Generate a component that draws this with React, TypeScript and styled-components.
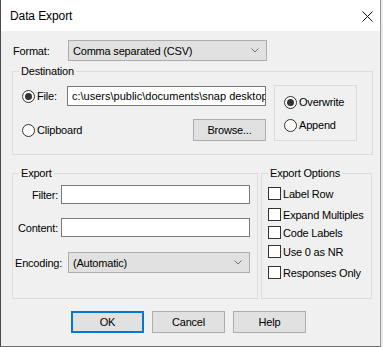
import React from 'react';
import styled, { createGlobalStyle } from 'styled-components';

const GlobalStyle = createGlobalStyle`
  html, body {
    margin: 0;
    padding: 0;
    background: #e9e9e9;
  }
  body {
    font-family: "Liberation Sans", Arial, sans-serif;
    font-size: 11px;
    letter-spacing: -0.2px;
    color: #000;
  }
`;

const Chevron = () => (
  <svg width="8" height="5" viewBox="0 0 8 5">
    <path d="M0.5 0.5 L4 4 L7.5 0.5" fill="none" stroke="#707070" strokeWidth="1" />
  </svg>
);

const CloseIcon = () => (
  <svg width="11" height="11" viewBox="0 0 11 11">
    <path d="M0.5 0.5 L10.5 10.5 M10.5 0.5 L0.5 10.5" stroke="#111" strokeWidth="1" />
  </svg>
);

const Radio = ({ checked, label }: { checked?: boolean; label: string }) => (
  <RadioRow>
    <RadioDot $checked={checked} />
    <span>{label}</span>
  </RadioRow>
);

const Check = ({ label, $space }: { label: string; $space: number }) => (
  <CheckRow $space={$space}>
    <CheckBox />
    <span>{label}</span>
  </CheckRow>
);

const App = () => {
  return (
    <>
      <GlobalStyle />
      <Window>
        <TitleBar>
          <Title>Data Export</Title>
          <CloseButton>
            <CloseIcon />
          </CloseButton>
        </TitleBar>
        <Body>
          <FormatRow>
            <FieldLabel $width={55}>Format:</FieldLabel>
            <Select $width={199}>
              <span>Comma separated (CSV)</span>
              <Chevron />
            </Select>
          </FormatRow>

          <Group>
            <Legend>Destination</Legend>
            <DestinationBody>
              <DestColumn>
                <DestRow>
                  <RadioSlot>
                    <Radio checked label="File:" />
                  </RadioSlot>
                  <TextBox $width={199}>
                    <Clip>c:\users\public\documents\snap desktop\export.csv</Clip>
                  </TextBox>
                </DestRow>
                <DestRow $between>
                  <Radio label="Clipboard" />
                  <Button>Browse...</Button>
                </DestRow>
              </DestColumn>
              <ModeBox>
                <Radio checked label="Overwrite" />
                <Radio label="Append" />
              </ModeBox>
            </DestinationBody>
          </Group>

          <LowerRow>
            <Group $width={246} $pad="0 7px 0 0">
              <Legend $offset={8}>Export</Legend>
              <ExportRows>
                <InputRow>
                  <RowLabel>Filter:</RowLabel>
                  <TextBox $width={189} $height={19} />
                </InputRow>
                <InputRow $top={14}>
                  <RowLabel>Content:</RowLabel>
                  <TextBox $width={189} $height={19} />
                </InputRow>
                <InputRow $top={15}>
                  <RowLabel $left>Encoding:</RowLabel>
                  <Select $width={182}>
                    <span>(Automatic)</span>
                    <Chevron />
                  </Select>
                </InputRow>
              </ExportRows>
            </Group>
            <Group $width={111} $pad="0 0 0 6px">
              <Legend $offset={2}>Export Options</Legend>
              <Check label="Label Row" $space={7} />
              <Check label="Expand Multiples" $space={8} />
              <Check label="Code Labels" $space={5} />
              <Check label="Use 0 as NR" $space={6} />
              <Check label="Responses Only" $space={8} />
            </Group>
          </LowerRow>

          <ButtonRow>
            <Button $primary>OK</Button>
            <Button>Cancel</Button>
            <Button>Help</Button>
          </ButtonRow>
        </Body>
      </Window>
    </>
  );
};

export default App;

const Window = styled.div`
  width: 381px;
  height: 347px;
  box-sizing: border-box;
  display: flex;
  flex-direction: column;
  background: #f0f0f0;
  border-left: 1px solid #4b4b4b;
  border-right: 1px solid #9a9a9a;
  border-bottom: 1px solid #6e6e6e;
`;

const TitleBar = styled.div`
  height: 31px;
  flex-shrink: 0;
  display: flex;
  align-items: center;
  justify-content: space-between;
  background: #fff;
  padding-left: 9px;
  padding-right: 7px;
`;

const Title = styled.div`
  font-size: 12px;
  letter-spacing: -0.1px;
`;

const CloseButton = styled.div`
  display: flex;
  align-items: center;
  padding-top: 1px;
`;

const Body = styled.div`
  display: flex;
  flex-direction: column;
  padding: 9px 7px 0 11px;
`;

const FormatRow = styled.div`
  display: flex;
  align-items: center;
  height: 21px;
`;

const FieldLabel = styled.div<{ $width: number }>`
  width: ${p => p.$width}px;
  padding-left: 1px;
`;

const Select = styled.div<{ $width: number }>`
  width: ${p => p.$width}px;
  height: 21px;
  box-sizing: border-box;
  display: flex;
  align-items: center;
  justify-content: space-between;
  padding: 0 7px 0 4px;
  background: #e1e1e1;
  border: 1px solid #adadad;
  white-space: nowrap;
`;

const Group = styled.fieldset<{ $width?: number; $pad?: string }>`
  margin: 4px 0 0;
  padding: ${p => p.$pad ?? '0 0 13px 9px'};
  border: 1px solid #dcdcdc;
  min-width: 0;
  box-sizing: border-box;
  ${p => (p.$width ? `width: ${p.$width}px;` : '')}
`;

const Legend = styled.legend<{ $offset?: number }>`
  padding: 0 2px;
  margin-left: ${p => (p.$offset !== undefined ? p.$offset - 2 : -3)}px;
  line-height: 13px;
`;

const DestinationBody = styled.div`
  display: flex;
  align-items: flex-start;
  padding-top: 8px;
`;

const DestColumn = styled.div`
  width: 244px;
  display: flex;
  flex-direction: column;
  gap: 13px;
`;

const DestRow = styled.div<{ $between?: boolean }>`
  display: flex;
  align-items: center;
  justify-content: ${p => (p.$between ? 'space-between' : 'flex-start')};
`;

const RadioSlot = styled.div`
  width: 45px;
`;

const RadioRow = styled.div`
  display: flex;
  align-items: center;
  gap: 2px;
  height: 16px;
`;

const RadioDot = styled.div<{ $checked?: boolean }>`
  width: 13px;
  height: 13px;
  box-sizing: border-box;
  border-radius: 50%;
  border: 1px solid #333;
  background: #fff;
  display: flex;
  align-items: center;
  justify-content: center;
  &::after {
    content: '';
    width: 7px;
    height: 7px;
    border-radius: 50%;
    background: ${p => (p.$checked ? '#333' : 'transparent')};
  }
`;

const TextBox = styled.div<{ $width: number; $height?: number }>`
  width: ${p => p.$width}px;
  height: ${p => p.$height ?? 20}px;
  box-sizing: border-box;
  background: #fff;
  border: 1px solid #7a7a7a;
  padding: 0 0 0 4px;
  display: flex;
  align-items: center;
  overflow: hidden;
  white-space: nowrap;
`;

const Clip = styled.span`
  display: block;
  overflow: hidden;
  max-width: 100%;
  letter-spacing: 0;
`;

const Button = styled.div<{ $primary?: boolean }>`
  width: 73px;
  height: 22px;
  box-sizing: border-box;
  display: flex;
  align-items: center;
  justify-content: center;
  background: #e1e1e1;
  border: ${p => (p.$primary ? '2px solid #0078d7' : '1px solid #adadad')};
`;

const ModeBox = styled.div`
  margin-left: 8px;
  margin-top: -1px;
  width: 83px;
  height: 56px;
  box-sizing: border-box;
  border: 1px solid #dcdcdc;
  display: flex;
  flex-direction: column;
  gap: 7px;
  padding: 8px 0 0 9px;
`;

const LowerRow = styled.div`
  display: flex;
  gap: 3px;
  margin-top: 8px;
`;

const ExportRows = styled.div`
  display: flex;
  flex-direction: column;
  padding-top: 5px;
  padding-bottom: 25px;
`;

const InputRow = styled.div<{ $top?: number }>`
  display: flex;
  align-items: center;
  margin-top: ${p => p.$top ?? 0}px;
`;

const RowLabel = styled.div<{ $left?: boolean }>`
  flex: 1;
  text-align: ${p => (p.$left ? 'left' : 'right')};
  padding: ${p => (p.$left ? '0 0 0 2px' : '0 3px 0 0')};
`;

const CheckRow = styled.div<{ $space: number }>`
  display: flex;
  align-items: center;
  gap: 2px;
  margin-top: ${p => p.$space}px;
  height: 13px;
  white-space: nowrap;
`;

const CheckBox = styled.div`
  width: 13px;
  height: 13px;
  box-sizing: border-box;
  border: 1px solid #333;
  background: #fff;
  flex-shrink: 0;
`;

const ButtonRow = styled.div`
  display: flex;
  justify-content: center;
  gap: 8px;
  margin-top: 12px;
  padding-right: 8px;
`;
